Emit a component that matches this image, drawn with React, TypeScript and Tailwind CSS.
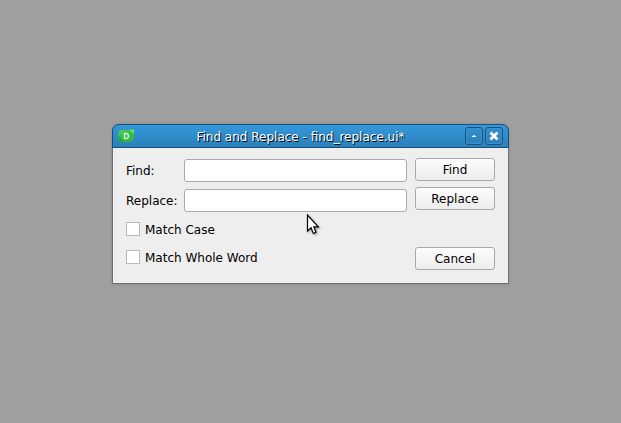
import React from "react";

function DialogButton({ children, className = "" }: { children: React.ReactNode; className?: string }) {
  return (
    <button
      className={`block h-[23px] w-20 rounded-[3px] border border-[#a9a9a9] bg-linear-to-b from-[#fdfdfd] to-[#ececec] text-center leading-[22px] ${className}`}
    >
      {children}
    </button>
  );
}

function Check({ label }: { label: string }) {
  return (
    <label className="flex h-[14px] items-center gap-[5px] leading-[14px]">
      <span className="size-[14px] border border-[#b9b9b9] bg-white" />
      <span className="translate-y-px">{label}</span>
    </label>
  );
}

function TitleButton({ children }: { children: React.ReactNode }) {
  return (
    <button className="flex h-[18px] w-[18px] items-center justify-center rounded-[3px] border border-[#185482] bg-linear-to-b from-[#348fcd] to-[#2b80b9] shadow-[inset_0_0_0_1px_#3991cb]">
      {children}
    </button>
  );
}

function AppIcon() {
  return (
    <svg width="17" height="14" viewBox="0 0 17 14">
      <defs>
        <linearGradient id="leaf" x1="0" y1="0" x2="1" y2="1">
          <stop offset="0" stopColor="#4fd05c" />
          <stop offset="0.5" stopColor="#34bd45" />
          <stop offset="1" stopColor="#2fb440" />
        </linearGradient>
      </defs>
      <path d="M2 1L16 0.5V10L13.5 12.5L3 13L0.5 11V3Z" fill="url(#leaf)" />
      <path d="M0.5 7L7 13H3L0.5 11Z" fill="#22a935" />
      <path d="M11 1L16 0.5V5Z" fill="#67df70" />
      <path d="M6.5 4.5H8Q10.5 4.5 10.5 7Q10.5 9.5 8 9.5H6.5Z" fill="none" stroke="#e0fae3" strokeWidth="1.3" />
    </svg>
  );
}

export default function App() {
  return (
    <div className="relative flex h-[423px] w-[621px] items-start overflow-hidden bg-[#9f9f9f] pt-[124px] pl-[112px] font-['DejaVu_Sans',sans-serif] text-[12px] text-black">
      <div className="h-[160px] w-[397px] rounded-t-[7px] border border-[#707070] bg-[#eeeeee] shadow-[0_0_3px_rgba(0,0,0,0.18)]">
        <header className="-mx-px -mt-px flex h-6 items-center rounded-t-[7px] border border-[#174e75] bg-linear-to-b from-[#3498db] to-[#2b80b9] pr-[5px] pl-[5px]">
          <AppIcon />
          <h1 className="flex-1 pt-[2px] pl-px text-center leading-[14px] text-white [text-shadow:1px_1px_0_#000]">
            Find and Replace - find_replace.ui*
          </h1>
          <div className="flex gap-[2px]">
            <TitleButton>
              <svg width="4" height="2" viewBox="0 0 4 2" fill="white">
                <path d="M0 1H4V2H0Z" />
                <path d="M1 0H3V1H1Z" opacity="0.7" />
              </svg>
            </TitleButton>
            <TitleButton>
              <svg width="10" height="10" viewBox="0 0 10 10" stroke="white" strokeWidth="2.8">
                <path d="M1.5 1.5L8.5 8.5M8.5 1.5L1.5 8.5" />
              </svg>
            </TitleButton>
          </div>
        </header>
        <main className="flex pt-[10px] pl-[13px]">
          <section className="w-[281px] pt-px">
            <div className="flex h-[23px] items-center">
              <label className="w-[58px]">Find:</label>
              <input className="h-[23px] w-[223px] rounded-[3px] border border-[#a9a9a9] bg-white" />
            </div>
            <div className="mt-[7px] flex h-[23px] items-center">
              <label className="w-[58px]">Replace:</label>
              <input className="h-[23px] w-[223px] rounded-[3px] border border-[#a9a9a9] bg-white" />
            </div>
            <div className="mt-[10px] flex flex-col gap-[14px]">
              <Check label="Match Case" />
              <Check label="Match Whole Word" />
            </div>
          </section>
          <section className="ml-2">
            <DialogButton>Find</DialogButton>
            <DialogButton className="mt-[6px]">Replace</DialogButton>
            <DialogButton className="mt-[37px]">Cancel</DialogButton>
          </section>
        </main>
      </div>
      <svg className="absolute top-[213px] left-[306px] drop-shadow-[1px_1px_1px_rgba(0,0,0,0.4)]" width="15" height="23" viewBox="0 0 15 23">
        <path d="M1.5 2V18L5 14.8L7.4 20.5L10 19.3L7.8 13.9H12.3Z" fill="white" stroke="black" strokeWidth="1.2" />
      </svg>
    </div>
  );
}
